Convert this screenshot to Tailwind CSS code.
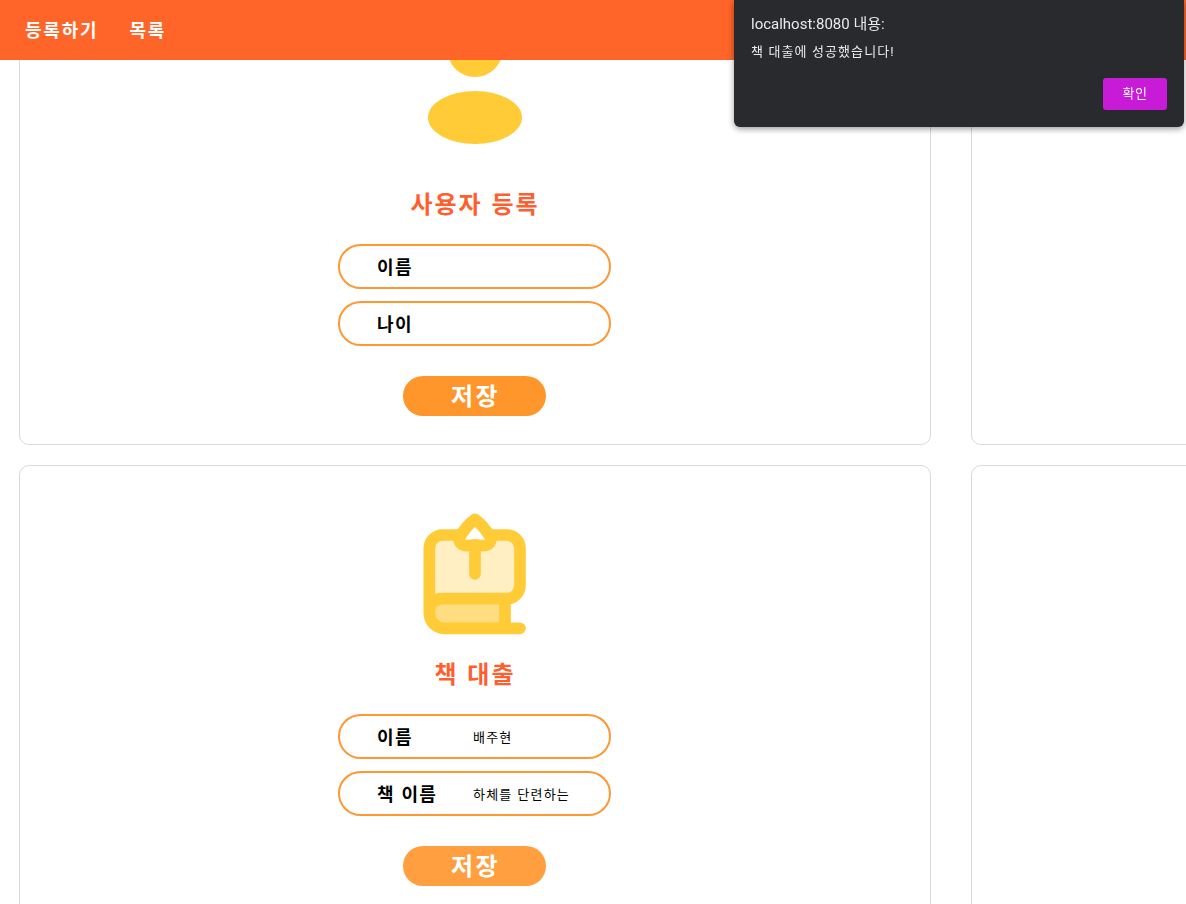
<!DOCTYPE html>
<html lang="ko">
<head>
  <meta charset="UTF-8" />
  <title>도서 대출</title>
  <script src="https://cdn.jsdelivr.net/npm/@tailwindcss/browser@4"></script>
</head>

<body class="bg-white h-screen overflow-hidden font-['Noto_Sans_CJK_KR','Noto_Sans',sans-serif]">
  <!-- Navbar -->
  <nav class="fixed top-0 inset-x-0 z-10 h-[60px] pb-[2px] bg-[#ff6428] flex items-center gap-[31px] pl-[25px] text-[18px] font-bold tracking-[1.8px] text-white">
    <a href="#">등록하기</a>
    <a href="#">목록</a>
  </nav>

  <!-- Cards -->
  <main class="grid grid-cols-[912px_912px] gap-x-10 gap-y-[20px] pl-[19px] -mt-[5px]">

    <!-- User form -->
    <section class="h-[450px] bg-white border border-[#d9d9d9] rounded-[10px] pt-[34px] flex flex-col items-center">
      <svg class="w-[150px] h-[150px]" viewBox="0 0 150 150" fill="#ffcb37">
        <circle cx="75" cy="19.4" r="27.6" />
        <ellipse cx="75" cy="87.5" rx="47" ry="26.5" />
      </svg>
      <h2 class="mt-[6px] h-9 leading-[34px] text-2xl font-bold tracking-[2px] text-[#ff5e2e]">사용자 등록</h2>
      <form class="mt-[22px] mr-px flex flex-col items-center gap-3">
        <label class="w-[273px] h-[45px] border-2 border-[#ff9733] rounded-full flex items-center pl-[37px] text-black">
          <span class="w-[96px] shrink-0 pb-[2px] text-lg font-bold tracking-[1.4px]">이름</span>
          <input class="w-[130px] text-[13px] tracking-[1.2px] outline-none" />
        </label>
        <label class="w-[273px] h-[45px] border-2 border-[#ff9733] rounded-full flex items-center pl-[37px] text-black">
          <span class="w-[96px] shrink-0 pb-[2px] text-lg font-bold tracking-[1.4px]">나이</span>
          <input class="w-[130px] text-[13px] tracking-[1.2px] outline-none" />
        </label>
        <button type="button" class="mt-[18px] w-[143px] h-10 pb-[2px] pl-[2px] rounded-full bg-[#ff962b] text-white text-2xl font-bold tracking-[2.5px]">저장</button>
      </form>
    </section>

    <section class="h-[450px] bg-white border border-[#d9d9d9] rounded-[10px]"></section>

    <!-- Book loan form -->
    <section class="h-[450px] bg-white border border-[#d9d9d9] rounded-[10px] pt-[34px] flex flex-col items-center">
      <svg class="w-[150px] h-[150px]" viewBox="0 0 450 450" fill="none" stroke="#ffcb37" stroke-width="35" stroke-linecap="round" stroke-linejoin="round">
        <path d="M88 340V145A40 40 0 0 1 128 105H320A40 40 0 0 1 360 145V256A40 40 0 0 1 320 296H130Q88 296 88 340Z" fill="#ffefc2" stroke="none" />
        <path d="M88 340Q88 296 130 296H315V385H133A45 45 0 0 1 88 340Z" fill="#ffdd80" stroke="none" />
        <path d="M88 340V145A40 40 0 0 1 128 105H320A40 40 0 0 1 360 145V256A40 40 0 0 1 320 296H130Q88 296 88 340A45 45 0 0 0 133 385H360" />
        <path d="M315 296V385" />
        <path d="M225 58Q200 75 177 115Q178 137 200 137Q225 134 250 137Q272 137 273 115Q250 75 225 58Z" fill="#fff" />
        <path d="M225 135V222" />
      </svg>
      <h2 class="mt-[6px] h-9 leading-[34px] text-2xl font-bold tracking-[2px] text-[#ff5e2e]">책 대출</h2>
      <form class="mt-[22px] mr-px flex flex-col items-center gap-3">
        <label class="w-[273px] h-[45px] border-2 border-[#ff9733] rounded-full flex items-center pl-[37px] text-black">
          <span class="w-[96px] shrink-0 pb-[2px] text-lg font-bold tracking-[1.4px]">이름</span>
          <input class="w-[130px] text-[13px] tracking-[1.2px] outline-none" value="배주현" />
        </label>
        <label class="w-[273px] h-[45px] border-2 border-[#ff9733] rounded-full flex items-center pl-[37px] text-black">
          <span class="w-[96px] shrink-0 pb-[2px] text-lg font-bold tracking-[1.4px]">책 이름</span>
          <input class="w-[130px] text-[13px] tracking-[1.2px] outline-none" value="하체를 단련하는" />
        </label>
        <button type="button" class="mt-[18px] w-[143px] h-10 pb-[2px] pl-[2px] rounded-full bg-[#ff9f40] text-white text-2xl font-bold tracking-[2.5px]">저장</button>
      </form>
    </section>

    <section class="h-[450px] bg-white border border-[#d9d9d9] rounded-[10px]"></section>
  </main>

  <!-- Alert dialog -->
  <div class="fixed top-0 right-[2px] z-20 w-[450px] h-[127px] bg-[#292a2d] rounded-b-md shadow-[0_2px_6px_rgba(0,0,0,0.4)] text-white px-[17px] font-['Roboto','Noto_Sans_CJK_KR',sans-serif]">
    <p class="pt-[12px] h-[24px] leading-6 text-[15px] box-content text-[#e8eaed]">localhost:8080 내용:</p>
    <p class="mt-[6px] text-[13px] leading-5 tracking-[1.1px] text-[#e8eaed]">책 대출에 성공했습니다!</p>
    <button type="button" class="absolute right-[17px] bottom-[17px] w-16 h-8 pb-px rounded-[3px] bg-[#c71bd8] text-[13px] tracking-[0.5px] text-white">확인</button>
  </div>
</body>
</html>
